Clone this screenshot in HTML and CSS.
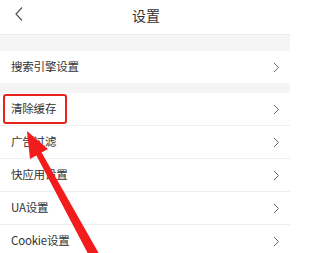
FILE: index.html
```html
<!DOCTYPE html>
<html lang="zh-CN">
<head>
<meta charset="utf-8">
<title>设置</title>
<link rel="stylesheet" href="styles.css">
</head>
<body>
<div class="page">
  <header class="topbar">
    <svg class="back" width="10" height="16" viewBox="0 0 10 16"><path d="M8 1.5 L2 8 L8 14.5" fill="none" stroke="#555" stroke-width="1.2"/></svg>
    <h1 class="title">设置</h1>
  </header>
  <div class="band band-top"></div>
  <div class="group">
    <div class="row row-single"><span class="label">搜索引擎设置</span><svg class="chev" width="7" height="11" viewBox="0 0 7 11"><path d="M1 1 L5.5 5.5 L1 10" fill="none" stroke="#666" stroke-width="1"/></svg></div>
  </div>
  <div class="band band-mid"></div>
  <div class="group">
    <div class="row"><span class="label">清除缓存</span><svg class="chev" width="7" height="11" viewBox="0 0 7 11"><path d="M1 1 L5.5 5.5 L1 10" fill="none" stroke="#666" stroke-width="1"/></svg><span class="highlight"></span></div>
    <div class="row"><span class="label">广告过滤</span><svg class="chev" width="7" height="11" viewBox="0 0 7 11"><path d="M1 1 L5.5 5.5 L1 10" fill="none" stroke="#666" stroke-width="1"/></svg></div>
    <div class="row"><span class="label">快应用设置</span><svg class="chev" width="7" height="11" viewBox="0 0 7 11"><path d="M1 1 L5.5 5.5 L1 10" fill="none" stroke="#666" stroke-width="1"/></svg></div>
    <div class="row"><span class="label">UA设置</span><svg class="chev" width="7" height="11" viewBox="0 0 7 11"><path d="M1 1 L5.5 5.5 L1 10" fill="none" stroke="#666" stroke-width="1"/></svg></div>
    <div class="row"><span class="label">Cookie设置</span><svg class="chev" width="7" height="11" viewBox="0 0 7 11"><path d="M1 1 L5.5 5.5 L1 10" fill="none" stroke="#666" stroke-width="1"/></svg></div>
  </div>
  <svg class="arrow" width="290" height="253" viewBox="0 0 290 253">
    <polygon points="27,131 48,149 41.6,152.6 103.3,261.3 94.5,266.1 36.4,155.4 30,159" fill="#f21c1c"/>
  </svg>
</div>
</body>
</html>
```

FILE: styles.css
```css
* { box-sizing: border-box; margin: 0; padding: 0; }
html, body { background: #fff; }
body {
  margin: 0;
  font-family: "Noto Sans CJK SC", "Noto Sans", sans-serif;
  color: #333;
  overflow: hidden;
}
.page {
  position: relative;
  width: 290px;
  height: 253px;
  overflow: hidden;
}
.topbar {
  height: 35px;
  display: flex;
  align-items: center;
  justify-content: center;
  position: relative;
  border-bottom: 1px solid #ececec;
}
.back {
  position: absolute;
  left: 14px;
  top: 6px;
}
.title {
  font-size: 14px;
  font-weight: normal;
  color: #333;
  line-height: 1;
  margin-left: 2px;
  margin-top: -4px;
}
.band { background: #f5f5f5; }
.band-top { height: 16px; }
.band-mid { height: 10px; }
.group { background: #fff; }
.row {
  position: relative;
  height: 33px;
  display: flex;
  align-items: center;
  justify-content: space-between;
  padding: 0 10px 0 11px;
  border-bottom: 1px solid #eeeeee;
}
.row-single { height: 32px; border-bottom: none; }
.label {
  font-size: 11.5px;
  letter-spacing: -0.2px;
  color: #333;
  line-height: 1;
}
.chev { display: block; }
.highlight {
  position: absolute;
  left: 3px;
  top: 1px;
  width: 64px;
  height: 30px;
  border: 2.5px solid #e8221c;
  border-radius: 3px;
}
.arrow {
  position: absolute;
  left: 0;
  top: 0;
  pointer-events: none;
}
```
